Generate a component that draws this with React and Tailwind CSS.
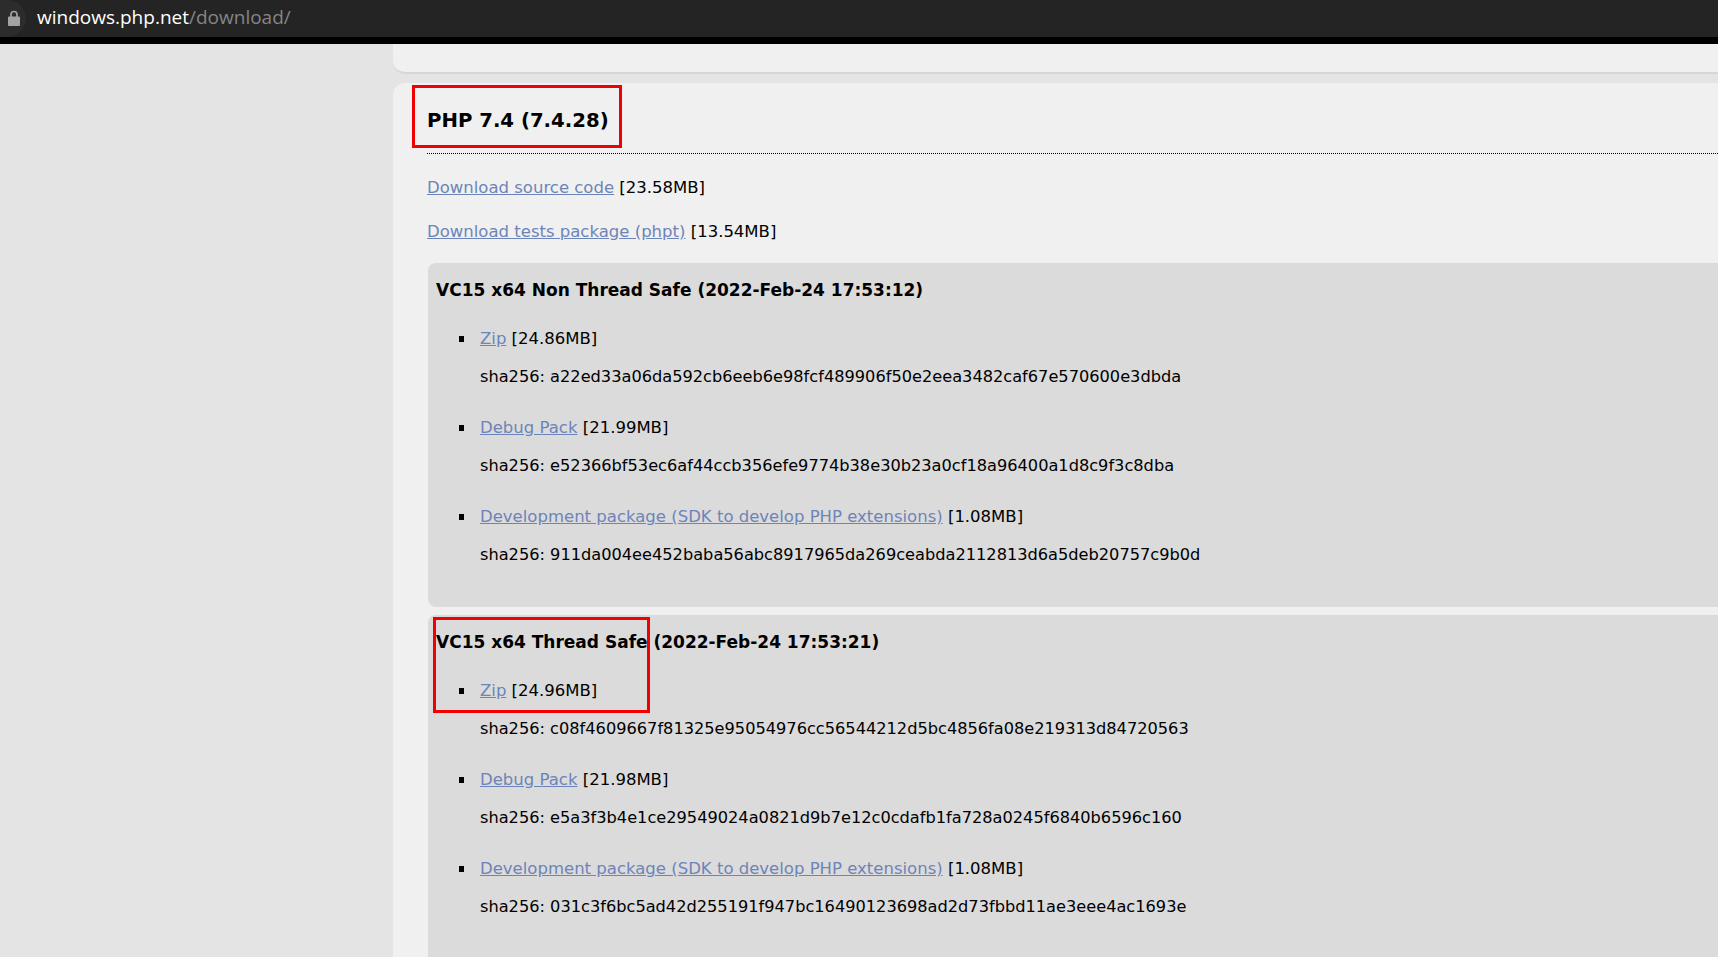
import React from "react";

const bodyFont = "font-['DejaVu_Sans',sans-serif]";

function Build({ title, links, last }) {
  return (
    <div className={`bg-[#dbdbdb] rounded-l-lg px-2 ${last ? "h-[400px] mt-[8px]" : "h-[344px]"}`}>
      <h4 className="h-[52px] pt-[15px] text-[17px] leading-[24px] font-bold text-black whitespace-nowrap">{title}</h4>
      <ul className="list-none mt-[8px]">
        {links.map((l, i) => (
          <li key={i} className={`relative pl-[44px] ${i === 0 ? "" : "mt-[16px]"}`}>
            <span className="absolute left-[23px] top-[13px] w-[5px] h-[6px] bg-black" />
            <p className="h-[35px] leading-[32px] text-black whitespace-nowrap">
              <a href="#" className="text-[#6d84b8] underline">{l.name}</a> [{l.size}]
            </p>
            <p className="h-[38px] leading-[38px] text-[16.2px] text-black whitespace-nowrap">sha256: {l.sha}</p>
          </li>
        ))}
      </ul>
    </div>
  );
}

const nts = [
  { name: "Zip", size: "24.86MB", sha: "a22ed33a06da592cb6eeb6e98fcf489906f50e2eea3482caf67e570600e3dbda" },
  { name: "Debug Pack", size: "21.99MB", sha: "e52366bf53ec6af44ccb356efe9774b38e30b23a0cf18a96400a1d8c9f3c8dba" },
  { name: "Development package (SDK to develop PHP extensions)", size: "1.08MB", sha: "911da004ee452baba56abc8917965da269ceabda2112813d6a5deb20757c9b0d" },
];

const ts = [
  { name: "Zip", size: "24.96MB", sha: "c08f4609667f81325e95054976cc56544212d5bc4856fa08e219313d84720563" },
  { name: "Debug Pack", size: "21.98MB", sha: "e5a3f3b4e1ce29549024a0821d9b7e12c0cdafb1fa728a0245f6840b6596c160" },
  { name: "Development package (SDK to develop PHP extensions)", size: "1.08MB", sha: "031c3f6bc5ad42d255191f947bc16490123698ad2d73fbbd11ae3eee4ac1693e" },
];

export default function App() {
  return (
    <div className="relative w-[1718px] h-[957px] overflow-hidden bg-[#e4e4e4]">
      {/* browser address bar */}
      <div className="h-[44px] bg-[#242424] border-b-[7px] border-black flex items-start">
        <div className="w-[26px] h-[37px] flex items-center justify-center bg-[#2c2c2c] rounded-r-full">
          <svg width="14" height="17" viewBox="0 0 14 17" className="ml-[2px]">
            <path d="M4 7V4.5a3 3 0 0 1 6 0V7" fill="none" stroke="#a3a3a3" strokeWidth="1.7" />
            <rect x="1" y="6.5" width="12" height="9.5" rx="1" fill="#a3a3a3" />
          </svg>
        </div>
        <div className="ml-[11px] h-[37px] leading-[35px] text-[19px] font-['Open_Sans',sans-serif] text-white whitespace-nowrap">
          windows.php.net<span className="text-[#858585]">/download/</span>
        </div>
      </div>

      {/* page */}
      <div className={`ml-[393px] ${bodyFont} text-[16.5px]`}>
        <div className="h-[30px] bg-[#f0f0f0] rounded-bl-xl border-b-2 border-[#d6d6d6]" />
        <div className="mt-[9px] h-[900px] bg-[#f0f0f0] rounded-tl-xl pl-[34px]">
          <h3 className="h-[71px] pt-[23px] text-[19.7px] leading-[30px] font-bold text-black border-b border-dotted border-black">PHP 7.4 (7.4.28)</h3>
          <p className="mt-[21px] h-[26px] leading-[26px] text-black whitespace-nowrap">
            <a href="#" className="text-[#6d84b8] underline">Download source code</a> [23.58MB]
          </p>
          <p className="mt-[18px] h-[26px] leading-[26px] text-black whitespace-nowrap">
            <a href="#" className="text-[#6d84b8] underline">Download tests package (phpt)</a> [13.54MB]
          </p>
          <div className="mt-[18px] ml-[1px]">
            <Build title="VC15 x64 Non Thread Safe (2022-Feb-24 17:53:12)" links={nts} />
            <Build title="VC15 x64 Thread Safe (2022-Feb-24 17:53:21)" links={ts} last />
          </div>
        </div>
      </div>

      {/* red annotation boxes */}
      <div className="absolute left-[412px] top-[85px] w-[210px] h-[63px] border-[3px] border-[#f00000]" />
      <div className="absolute left-[433px] top-[617px] w-[217px] h-[96px] border-[3px] border-[#f00000]" />
    </div>
  );
}
